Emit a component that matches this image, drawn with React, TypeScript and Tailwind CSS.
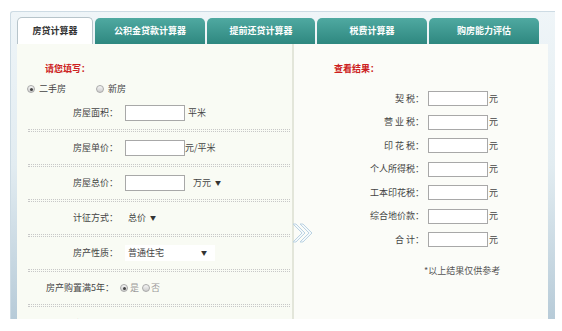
import React from "react";

const font = { fontFamily: '"Noto Sans CJK SC", "Noto Sans", sans-serif' };

function Radio({ checked = false }: { checked?: boolean }) {
  return (
    <span className="inline-flex items-center justify-center w-[8px] h-[8px] rounded-full border border-[#a9a9a9] bg-gradient-to-b from-[#f6f6f6] to-[#cdcdcd] shrink-0">
      {checked && <span className="w-[3px] h-[3px] rounded-full bg-[#444]" />}
    </span>
  );
}

function Dots() {
  return <div className="ml-[11px] mr-[2px] h-[3px] border-y border-dotted border-[#c8c8c8]" />;
}

function Input({ w = 60, h = 16 }: { w?: number; h?: number }) {
  return (
    <span
      className="inline-block bg-white border border-[#a8a8a8] shrink-0"
      style={{ width: w, height: h }}
    />
  );
}

function Tri() {
  return <span className="text-[6px] ml-[4px] text-[#333]">▼</span>;
}

function LeftRow({ label, children, h = 32 }: { label: string; children: React.ReactNode; h?: number }) {
  return (
    <div className="flex items-center" style={{ height: h }}>
      <span className="w-[101px] text-right">{label}</span>
      <div className="ml-[7px] flex items-center">{children}</div>
    </div>
  );
}

function RightRow({ label }: { label: string }) {
  return (
    <div className="flex items-center h-[23.5px]">
      <span className="w-[130px] text-right whitespace-pre">{label}</span>
      <span className="ml-[4px] flex">
        <Input w={60} h={15} />
      </span>
      <span className="ml-[1px]">元</span>
    </div>
  );
}

export default function App() {
  return (
    <div
      className="w-[562px] h-[331px] bg-white overflow-hidden pt-[11px] pl-[10px] text-[9px] leading-[14px] text-[#444]"
      style={font}
    >
      <div className="w-[545px] h-[308px] overflow-hidden rounded-tl-[3px] border-l border-t border-[#cddbe4] bg-gradient-to-b from-[#eff5f8] via-[#e2ecf1] to-[#b7cbd8] pl-[6px] pr-[7px] pt-[5px] flex flex-col">
        {/* tabs */}
        <div className="flex items-end gap-[2px] h-[27px] shrink-0">
          <div className="w-[76px] h-[27px] bg-white border border-b-0 border-[#b7c4ca] rounded-t-[5px] flex items-center justify-center font-bold text-[#333]">
            房贷计算器
          </div>
          <div className="w-[110px] h-[26px] rounded-t-[5px] bg-gradient-to-b from-[#4fa9a1] to-[#2e8880] flex items-center justify-center font-bold text-white">
            公积金贷款计算器
          </div>
          <div className="w-[108px] h-[26px] rounded-t-[5px] bg-gradient-to-b from-[#4fa9a1] to-[#2e8880] flex items-center justify-center font-bold text-white">
            提前还贷计算器
          </div>
          <div className="w-[110px] h-[26px] rounded-t-[5px] bg-gradient-to-b from-[#4fa9a1] to-[#2e8880] flex items-center justify-center font-bold text-white">
            税费计算器
          </div>
          <div className="w-[110px] h-[26px] rounded-t-[5px] bg-gradient-to-b from-[#4fa9a1] to-[#2e8880] flex items-center justify-center font-bold text-white">
            购房能力评估
          </div>
        </div>

        {/* content */}
        <div className="flex h-[275px] shrink-0 relative">
          {/* left panel */}
          <div className="w-[275px] bg-[#f9fbf4] overflow-hidden">
            <div className="pt-[18px] pl-[28px] h-[32px] font-bold text-[#cc2020]">请您填写：</div>
            <div className="mt-[6px] h-[14px] flex items-center pl-[10px]">
              <Radio checked />
              <span className="ml-[4px]">二手房</span>
              <span className="ml-[30px] flex items-center">
                <Radio />
                <span className="ml-[4px]">新房</span>
              </span>
            </div>
            <LeftRow label="房屋面积：" h={33}>
              <Input />
              <span className="ml-[3px]">平米</span>
            </LeftRow>
            <Dots />
            <LeftRow label="房屋单价：">
              <Input />
              <span>元/平米</span>
            </LeftRow>
            <Dots />
            <LeftRow label="房屋总价：">
              <Input />
              <span className="ml-[8px]">万元</span>
              <Tri />
            </LeftRow>
            <Dots />
            <LeftRow label="计征方式：">
              <span className="ml-[3px]">总价</span>
              <Tri />
            </LeftRow>
            <Dots />
            <LeftRow label="房产性质：">
              <span className="w-[90px] h-[16px] bg-white flex items-center justify-between pl-[3px] pr-[8px]">
                <span>普通住宅</span>
                <span className="text-[6px] text-[#333]">▼</span>
              </span>
            </LeftRow>
            <Dots />
            <div className="h-[32px] flex items-center pl-[29px]">
              <span>房产购置满5年：</span>
              <span className="ml-[6px] flex items-center text-[#999]">
                <Radio checked />
                <span className="ml-[2px]">是</span>
                <span className="ml-[3px] flex items-center">
                  <Radio />
                  <span className="ml-[1px]">否</span>
                </span>
              </span>
            </div>
            <Dots />
            <div className="h-[34px] flex items-center pl-[29px]">
              <span>是否家庭唯一住房：</span>
              <span className="ml-[6px] flex items-center text-[#999]">
                <Radio checked />
                <span className="ml-[2px]">是</span>
                <Radio />
                <span className="ml-[1px]">否</span>
              </span>
            </div>
          </div>

          {/* divider */}
          <div className="w-[2px] bg-[#e3e6da]" />

          {/* right panel */}
          <div className="w-[254px] bg-[#fbfcf8]">
            <div className="pt-[18px] pl-[40px] h-[32px] font-bold text-[#cc2020]">查看结果：</div>
            <div className="mt-[11px]">
              <RightRow label="契 税：" />
              <RightRow label="营 业 税：" />
              <RightRow label="印 花 税：" />
              <RightRow label="个人所得税：" />
              <RightRow label="工本印花税：" />
              <RightRow label="综合地价款：" />
              <RightRow label="合 计：" />
            </div>
            <div className="mt-[12px] pl-[130px] h-[14px] text-[#555]">*以上结果仅供参考</div>
          </div>

          {/* chevron */}
          <svg
            className="absolute left-[275px] top-[178px]"
            width="22"
            height="22"
            viewBox="0 0 22 22"
          >
            <path d="M1 2 L10 11 L1 20 L4 20 L13 11 L4 2 Z" fill="#f4f9fc" stroke="#bcd3e2" strokeWidth="1" />
            <path d="M8 2 L17 11 L8 20 L11 20 L20 11 L11 2 Z" fill="#f4f9fc" stroke="#bcd3e2" strokeWidth="1" />
          </svg>
        </div>
      </div>
    </div>
  );
}
